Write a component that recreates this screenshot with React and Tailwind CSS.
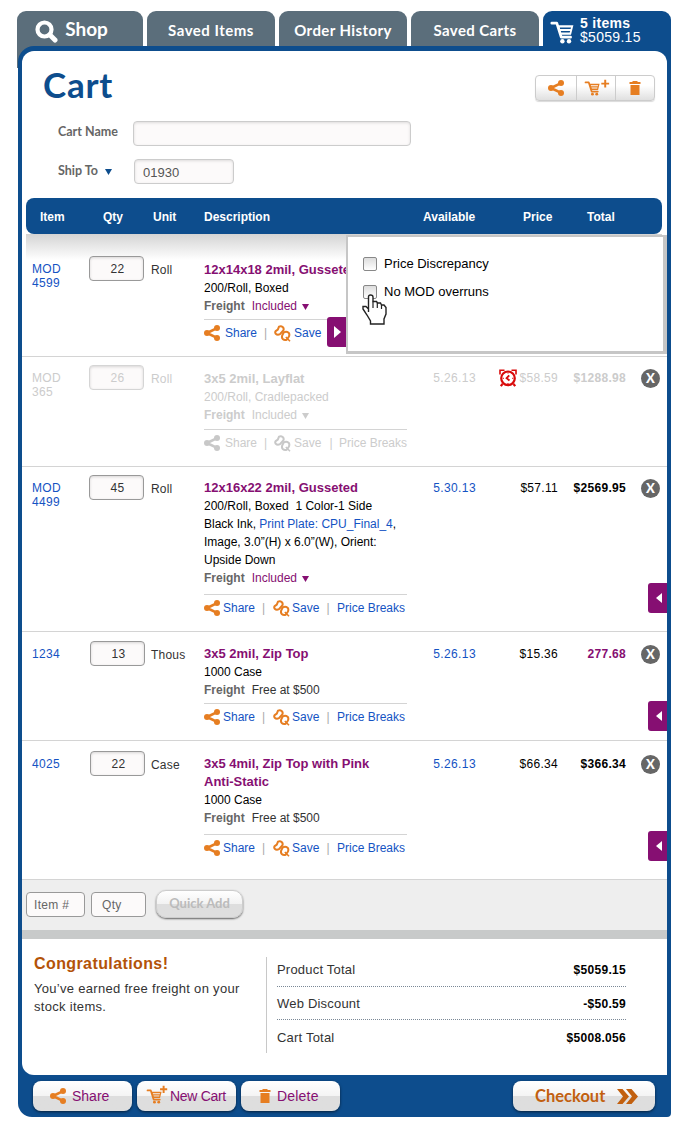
import React, { useState } from 'react';
import clsx from 'clsx';

const initialItems = [
  {
    id: '4599',
    sku: ['MOD', '4599'],
    qty: '22',
    unit: 'Roll',
    name: '12x14x18 2mil, Gusseted',
    details: ['200/Roll, Boxed'],
    freight: 'Included',
    menuOpen: true,
    rowClass: 'h-[123px] pt-[22px]',
    skuClass: 'pt-[6px]',
    qtyClass: 'pl-0',
    textClass: 'pt-[5px]',
    lineClass: 'mt-[4px]',
    wideActions: true,
  },
  {
    id: '365',
    sku: ['MOD', '365'],
    qty: '26',
    unit: 'Roll',
    name: '3x5 2mil, Layflat',
    details: ['200/Roll, Cradlepacked'],
    freight: 'Included',
    available: '5.26.13',
    price: '$58.59',
    total: '$1288.98',
    disabled: true,
    alert: true,
    rowClass: 'h-[110px] pt-[8px]',
    skuClass: 'pt-[6px]',
    qtyClass: 'pl-0',
    textClass: 'pt-[5px]',
    lineClass: 'mt-[5px]',
    wideActions: true,
  },
  {
    id: '4499',
    sku: ['MOD', '4499'],
    qty: '45',
    unit: 'Roll',
    name: '12x16x22 2mil, Gusseted',
    details: [
      '200/Roll, Boxed\u00a0 1 Color-1 Side',
      <>Black Ink, <a className="text-[#1453c3]">Print Plate: CPU_Final_4</a>,</>,
      'Image, 3.0”(H) x 6.0”(W), Orient:',
      'Upside Down',
    ],
    freight: 'Included',
    available: '5.30.13',
    price: '$57.11',
    total: '$2569.95',
    rowClass: 'h-[165px] pt-[8px]',
    skuClass: 'pt-[6px]',
    qtyClass: 'pl-0',
    textClass: 'pt-[4px]',
    lineClass: 'mt-[7px]',
    pullClass: 'top-[116px]',
  },
  {
    id: '1234',
    sku: ['1234'],
    qty: '13',
    unit: 'Thous',
    name: '3x5 2mil, Zip Top',
    details: ['1000 Case'],
    freight: 'Free at $500',
    available: '5.26.13',
    price: '$15.36',
    total: '277.68',
    highlight: true,
    rowClass: 'h-[109px] pt-[9px]',
    skuClass: 'pt-[6px]',
    qtyClass: 'pl-px',
    textClass: 'pt-[4px]',
    lineClass: 'mt-[4px]',
    pullClass: 'top-[69px]',
  },
  {
    id: '4025',
    sku: ['4025'],
    qty: '22',
    unit: 'Case',
    name: '3x5 4mil, Zip Top with Pink Anti\u2011Static',
    details: ['1000 Case'],
    freight: 'Free at $500',
    available: '5.26.13',
    price: '$66.34',
    total: '$366.34',
    rowClass: 'h-[139px] pt-[10px]',
    skuClass: 'pt-[6px]',
    qtyClass: 'pl-px',
    textClass: 'pt-[4px]',
    lineClass: 'mt-[7px]',
    pullClass: 'top-[90px]',
  },
];

const ShareIcon = ({ className = 'text-[#e67e22]' }) => (
  <svg width="16" height="16" viewBox="0 0 16 16" className={clsx('shrink-0', className)}>
    <path d="M3 8L13 3.200M3 8L13 12.800" stroke="currentColor" strokeWidth="2.6" />
    <circle cx="3" cy="8" r="3" fill="currentColor" />
    <circle cx="13" cy="3" r="3" fill="currentColor" />
    <circle cx="13" cy="13" r="3" fill="currentColor" />
  </svg>
);

const PinIcon = ({ className = 'text-[#e67e22]' }) => (
  <svg width="17" height="17" viewBox="0 0 17 17" className={clsx('shrink-0', className)} fill="none" stroke="currentColor" strokeLinejoin="round">
    <path d="M5 1.700Q7 0.800 8.700 2Q10.300 3.500 9.300 5.500L6 9.200Q3.500 10.500 1.700 8.800Q0.600 7 2 5.800L3.800 4.600Z" strokeWidth="2" />
    <path d="M9.800 7.300Q12.500 6 14.600 7.700Q16 9.500 14.800 11.700L12.700 14.800Q10.500 15.700 8.700 14Q7.400 12.300 8.400 10Z" strokeWidth="2" />
    <path d="M11.800 12L16 16.200" strokeWidth="1.600" />
  </svg>
);

const CartIcon = ({ size = 23, plus, className = 'text-[#e67e22]' }) => (
  <svg width={size} height={size} viewBox="0 0 23 23" className={clsx('shrink-0 overflow-visible', className)}>
    <path d="M0.800 2.200H5.800L10.200 16.200H19.600" fill="none" stroke="currentColor" strokeWidth="2.700" strokeLinejoin="round" strokeLinecap="round" />
    <path d="M6.500 4.200H22.400L20 13.800H9.300ZM8.600 6.600L9 8H19.600L20 6.600ZM9.600 10L10 11.600H18.700L19.100 10Z" fill="currentColor" fillRule="evenodd" />
    <circle cx="11.400" cy="20.200" r="2.200" fill="currentColor" />
    <circle cx="18" cy="20.200" r="2.200" fill="currentColor" />
    {plus === 'beside' && <path d="M31 -2V10M25 4H37" stroke="currentColor" strokeWidth="3" />}
    {plus === 'above' && <path d="M25.500 -5V6M20 0.500H31" stroke="currentColor" strokeWidth="3" />}
  </svg>
);

const TrashIcon = () => (
  <svg width="12" height="14" viewBox="0 0 12 14" fill="#e67e22" className="shrink-0">
    <path d="M0.500 1H3.500V0H8.500V1H11.500V3H0.500ZM1.500 4H10.500V14H1.500Z" />
  </svg>
);

const AlarmIcon = () => (
  <svg width="18" height="18" viewBox="0 0 18 18" fill="none" stroke="#d90b0b" className="shrink-0">
    <circle cx="9" cy="9.300" r="6.800" strokeWidth="2.200" />
    <path d="M1 5.500V1.200H5.500M17 5.500V1.200H12.500" strokeWidth="1.600" />
    <path d="M3.500 15L1.800 17.200M14.500 15L16.200 17.200" strokeWidth="2.200" />
    <path d="M10.200 6.300L7.600 9.200L10.500 11.600" strokeWidth="1.900" />
    <path d="M9 3.500V4.500M9 14V15M3.800 9.300H4.800M13.300 9.300H14.300" strokeWidth="1.200" />
  </svg>
);

const HandCursor = () => (
  <svg width="25" height="31" viewBox="0 0 25 31" className="pointer-events-none absolute left-[14px] top-[57px]">
    <path
      d="M6.500 18V3Q6.500 1 8.500 1Q11 1 11 3V7.500H14.500L15.500 9H18.500L19.500 11H22L24 13.500V20L22 25V30H8.500V27L5 21L1 15V12.500H4L6.500 15Z"
      fill="#fff"
      stroke="#222"
      strokeWidth="1.400"
    />
    <path d="M11 7.500V14M15.300 9V14M19.500 11V15" stroke="#222" strokeWidth="1.200" />
  </svg>
);

const Caret = ({ className }) => (
  <svg width="7" height="6" viewBox="0 0 7 6" className={clsx('inline-block', className)} fill="currentColor">
    <path d="M0 0H7L3.500 6Z" />
  </svg>
);

const Tab = ({ className, children }) => (
  <a className={clsx('flex h-[35px] w-32 justify-center rounded-t-[9px] bg-[#5b6e7b] font-[Lato] font-bold text-white', className)}>
    {children}
  </a>
);

const QtyInput = ({ value, disabled, onChange }) => (
  <input
    value={value}
    onChange={onChange}
    disabled={disabled}
    className={clsx(
      'block h-[25px] w-[55px] rounded border bg-[#fcfafa] pl-[2px] pt-px text-center text-[12px] tracking-[0.3px] shadow-[inset_0_1px_3px_rgba(0,0,0,0.15)]',
      disabled ? 'border-[#d5d5d5] text-[#ccc]' : 'border-[#999] text-[#333]'
    )}
  />
);

const Actions = ({ item }) => {
  const link = item.disabled ? 'text-[#ccc]' : 'text-[#1453c3]';
  const icon = item.disabled ? 'text-[#c8c8c8]' : 'text-[#e67e22]';
  return (
    <div className="mt-[4px] flex h-[18px] items-center whitespace-nowrap">
      <span className={clsx('flex items-center', item.wideActions ? 'w-[60px] gap-[5px]' : 'w-[58px] gap-[3px]')}>
        <ShareIcon className={icon} />
        <a className={link}>Share</a>
      </span>
      <span className={clsx('w-[4px]', item.disabled ? 'text-[#ccc]' : 'text-[#aaa]')}>|</span>
      <span className={clsx('flex items-center', item.wideActions ? 'ml-[6px] w-[54px] gap-[3px]' : 'ml-[7px] w-[52px] gap-[2px]')}>
        <PinIcon className={icon} />
        <a className={link}>Save</a>
      </span>
      <span className={clsx('w-[6px] text-center', item.disabled ? 'text-[#ccc]' : 'text-[#aaa]')}>|</span>
      <a className={clsx(link, item.wideActions ? 'ml-[5px]' : 'ml-[6px]')}>Price Breaks</a>
    </div>
  );
};

const OptionsMenu = () => (
  <div className="absolute left-[305px] top-px z-10 flex items-start">
    <button className="mt-[82px] flex h-[30px] w-[19px] items-center justify-center rounded-l-[3px] bg-[#860f72] pl-[2px]">
      <svg width="7" height="12" viewBox="0 0 7 12" fill="#fff">
        <path d="M0 0L7 6L0 12Z" />
      </svg>
    </button>
    <div className="relative h-[119px] w-[321px] border-2 border-b-[3px] border-r-4 border-[#c6c6c6] bg-white pl-[15px] pt-[17px] text-[13px]">
      {['Price Discrepancy', 'No MOD overruns'].map(label => (
        <label key={label} className="mb-2 flex h-5 items-center gap-[7px] text-black">
          <span className="mb-px h-[14px] w-[14px] rounded-[2px] border border-[#888] bg-linear-to-b from-[#ddd] to-white" />
          {label}
        </label>
      ))}
      <HandCursor />
    </div>
  </div>
);

const CartRow = ({ item, onQty }) => {
  const hasMenu = item.freight === 'Included';
  return (
    <div className={clsx('relative flex border-b border-[#d4d4d4] pl-[10px] text-[12px] leading-[18px]', item.rowClass, item.disabled ? 'text-[#ccc]' : 'text-black')}>
      <div className={clsx('w-[57px] leading-[14px] tracking-[0.3px]', item.skuClass, item.disabled ? 'text-[#ccc]' : 'text-[#1453c3]')}>
        {item.sku.map(line => (
          <div key={line}>{line}</div>
        ))}
      </div>
      <div className={clsx('w-[62px]', item.qtyClass)}>
        <QtyInput value={item.qty} disabled={item.disabled} onChange={onQty} />
      </div>
      <div className={clsx('w-[53px] pt-[5px] tracking-[0.2px]', !item.disabled && 'text-[#333]')}>{item.unit}</div>
      <div className={clsx('w-[203px]', item.textClass)}>
        <div className={clsx('w-[185px] text-[13px] font-bold', !item.disabled && 'text-[#860f72]')}>{item.name}</div>
        {item.details.map((line, i) => (
          <div key={i} className="whitespace-nowrap">{line}</div>
        ))}
        <div className="whitespace-nowrap">
          <span className={clsx('mr-[7px] font-bold', !item.disabled && 'text-[#666]')}>Freight</span>
          <span className={clsx(!item.disabled && (hasMenu ? 'text-[#860f72]' : 'text-[#333]'))}>
            {item.freight}
            {hasMenu && <Caret className="ml-[5px]" />}
          </span>
        </div>
        <div className={clsx('border-t border-[#d4d4d4]', item.lineClass)} />
        <Actions item={item} />
      </div>
      {!item.menuOpen && (
        <div className="mt-1 flex h-[18px] flex-1 items-center">
          <div className={clsx('w-[69px] text-right tracking-[0.4px]', !item.disabled && 'text-[#1453c3]')}>{item.available}</div>
          <div className="flex w-[82px] items-center justify-end gap-[2px] tracking-[0.3px]">
            {item.alert && <AlarmIcon />}
            {item.price}
          </div>
          <div className={clsx('w-[68px] text-right font-bold tracking-[0.3px]', item.highlight && 'text-[#860f72]')}>{item.total}</div>
          <button className="ml-[15px] flex h-[19px] w-[19px] items-center justify-center rounded-full bg-[#666] font-[Lato] text-[13px] font-black leading-none text-white">
            X
          </button>
        </div>
      )}
      {item.menuOpen && <OptionsMenu />}
      {item.pullClass && (
        <button className={clsx('absolute right-0 flex h-[30px] w-[19px] items-center justify-center rounded-l-[3px] bg-[#860f72] pl-[2px]', item.pullClass)}>
          <svg width="6" height="10" viewBox="0 0 6 10" fill="#fff">
            <path d="M6 0L0 5L6 10Z" />
          </svg>
        </button>
      )}
    </div>
  );
};

const FooterButton = ({ className, children }) => (
  <button
    className={clsx(
      'flex h-[30px] items-center rounded-lg bg-linear-to-b from-white from-0% via-[#f4f4f4] via-50% to-[#dedede] to-50% text-[14px] text-[#860f72] shadow-[0_1px_3px_rgba(0,0,0,0.6)]',
      className
    )}
  >
    {children}
  </button>
);

const App = () => {
  const [items, setItems] = useState(initialItems);
  const [cartName, setCartName] = useState('');
  const [zip, setZip] = useState('01930');

  const updateQty = (id, qty) => {
    setItems(items.map(item => (item.id === id ? { ...item, qty } : item)));
  };

  return (
    <div className="h-[1139px] w-[682px] bg-white pl-[17px] pt-[11px] font-['Liberation_Sans',sans-serif]">
      {/* Tabs */}
      <div className="relative flex gap-1">
        <div className="absolute left-0 top-[20px] h-[37px] w-[20px] bg-[#5b6e7b]" />
        <Tab className="relative w-[126px] gap-[7px] pr-[17px] text-[19px] leading-[36px]">
          <svg width="23" height="23" viewBox="0 0 23 23" fill="none" stroke="#fff" className="mt-[9px]">
            <circle cx="9.500" cy="9.500" r="7" strokeWidth="4.200" />
            <path d="M15 15L20 20" strokeWidth="5" strokeLinecap="round" />
          </svg>
          Shop
        </Tab>
        <Tab className="text-[15px] leading-[38px] tracking-[0.5px]">Saved Items</Tab>
        <Tab className="text-[15px] leading-[38px] tracking-[0.4px]">Order History</Tab>
        <Tab className="text-[15px] leading-[39px] tracking-[0.4px]">Saved Carts</Tab>
        <div className="flex h-[35px] w-32 rounded-t-[9px] bg-[#0d4d8d] pl-2 pt-[5px] text-[14px] leading-[14px] text-white">
          <CartIcon className="mt-[5px] text-white" />
          <div className="ml-[6px] tracking-[0.3px]">
            <div className="font-bold">5 items</div>
            <div>$5059.15</div>
          </div>
        </div>
      </div>

      <div className="relative ml-px h-[1071px] w-[653px] rounded-b-[14px] rounded-br-[4px] rounded-tl-[16px] bg-[#0d4d8d] px-1 pt-[5px]">
        <div className="h-[1024px] rounded-bl-[12px] rounded-t-[12px] bg-white">
          {/* Cart details */}
          <div className="h-[147px]">
            <div className="flex items-start justify-between pl-[21px] pr-3">
              <h1 className="pb-[2px] pt-[12px] font-[Lato] text-[35px] font-bold leading-[42px] tracking-[0.8px] text-[#0d4d8d]">Cart</h1>
              <div className="mt-6 flex h-[26px] w-[120px] divide-x divide-[#ccc] rounded border border-[#ccc] bg-linear-to-b from-white from-40% to-[#e0e0e0] shadow-[0_1px_1px_rgba(0,0,0,0.15)]">
                <button className="flex w-[41px] items-center justify-center"><ShareIcon /></button>
                <button className="flex w-[39px] items-center pl-2"><CartIcon size={15} plus="beside" /></button>
                <button className="flex flex-1 items-center justify-center"><TrashIcon /></button>
              </div>
            </div>
            <div className="mt-[14px] flex items-center pl-9">
              <label className="w-[75px] pb-[2px] font-[Lato] text-[12.5px] font-bold text-[#666]">Cart Name</label>
              <input
                value={cartName}
                onChange={e => setCartName(e.target.value)}
                className="h-[25px] w-[278px] rounded border border-[#ccc] bg-[#fcfafa] px-2 shadow-[inset_0_1px_3px_rgba(0,0,0,0.12)]"
              />
            </div>
            <div className="mt-[13px] flex items-center pl-9">
              <label className="flex w-[76px] items-center gap-[7px] font-[Lato] text-[12.5px] font-bold text-[#666]">
                Ship To <Caret className="text-[#0d4d8d]" />
              </label>
              <input
                value={zip}
                onChange={e => setZip(e.target.value)}
                className="h-[25px] w-[100px] rounded border border-[#ccc] bg-[#fcfafa] px-2 pt-px text-[13px] text-[#555] shadow-[inset_0_1px_3px_rgba(0,0,0,0.12)]"
              />
            </div>
          </div>

          {/* Table */}
          <div className="ml-1 flex h-9 w-[636px] items-center rounded-lg bg-[#0d4d8d] pl-[14px] pt-px text-[12px] font-bold text-white">
            <div className="w-[63px]">Item</div>
            <div className="w-[50px]">Qty</div>
            <div className="w-[51px]">Unit</div>
            <div className="w-[219px]">Description</div>
            <div className="w-[100px]">Available</div>
            <div className="w-[64px]">Price</div>
            <div>Total</div>
          </div>
          <div className="relative">
            <div className="absolute left-1 top-0 h-[26px] w-[636px] bg-linear-to-b from-[#d4d4d4] to-white" />
            {items.map(item => (
              <CartRow key={item.id} item={item} onQty={e => updateQty(item.id, e.target.value)} />
            ))}
          </div>

          {/* Quick add */}
          <div className="flex h-[59px] items-start border-b-[9px] border-[#c8caca] bg-[#eee] pl-1 pt-3 text-[12px] text-[#666]">
            <input placeholder="Item #" className="h-[25px] w-[59px] rounded border border-[#999] bg-[#fcfafa] pl-[7px] tracking-[0.3px] placeholder:text-[#666]" />
            <input placeholder="Qty" className="ml-[6px] h-[25px] w-[55px] rounded border border-[#999] bg-[#fcfafa] pl-[10px] tracking-[0.3px] placeholder:text-[#666]" />
            <button className="-mt-[2px] ml-[10px] h-[28px] w-[87px] rounded-[10px] border border-[#ccc] bg-linear-to-b from-white from-0% via-[#f2f2f2] via-50% to-[#dedede] to-50% font-[Lato] text-[13px] font-bold text-[#bbb] shadow-[0_1px_2px_rgba(0,0,0,0.6)]">
              Quick Add
            </button>
          </div>

          {/* Totals */}
          <div className="flex pl-3 pt-[18px]">
            <div className="w-[232px]">
              <h2 className="-mt-[5px] text-[16px] font-bold leading-[24px] tracking-[0.4px] text-[#b35308]">Congratulations!</h2>
              <p className="mt-[4px] text-[13px] leading-[18px] tracking-[0.3px] text-[#333]">
                You’ve earned free freight on your stock items.
              </p>
            </div>
            <div className="h-24 w-[360px] border-l border-[#c8c8c8] pl-[10px] text-[13px] tracking-[0.2px] text-[#333]">
              {[
                ['Product Total', '$5059.15', 'h-[29px] pb-[4px]'],
                ['Web Discount', '-$50.59', 'h-[33px] border-t pt-px'],
                ['Cart Total', '$5008.056', 'h-[36px] border-t'],
              ].map(([label, value, rowClass]) => (
                <div key={label} className={clsx('flex items-center justify-between border-dotted border-[#7a8896]', rowClass)}>
                  <span>{label}</span>
                  <span className="text-[12px] font-bold tracking-[0.3px] text-black">{value}</span>
                </div>
              ))}
            </div>
          </div>
        </div>

        {/* Footer actions */}
        <div className="flex gap-[5px] pl-[11px] pr-3 pt-[6px]">
          <FooterButton className="w-[99px] gap-[6px] pl-[17px]"><ShareIcon />Share</FooterButton>
          <FooterButton className="w-[99px] gap-2 pl-[10px] tracking-[-0.3px]"><CartIcon size={15} plus="above" />New Cart</FooterButton>
          <FooterButton className="w-[99px] gap-[6px] pl-[18px] tracking-[0.2px]"><TrashIcon />Delete</FooterButton>
          <FooterButton className="ml-auto w-[142px] gap-3 pl-[22px] font-[Lato] text-[16.5px] font-bold text-[#c2600f]">
            Checkout
            <svg width="21" height="15" viewBox="0 0 21 15" fill="#c2600f">
              <path d="M0 0H5.500L12 7.500L5.500 15H0L6 7.500ZM9 0H14.500L21 7.500L14.500 15H9L15 7.500Z" />
            </svg>
          </FooterButton>
        </div>
      </div>
    </div>
  );
};

export default App;
